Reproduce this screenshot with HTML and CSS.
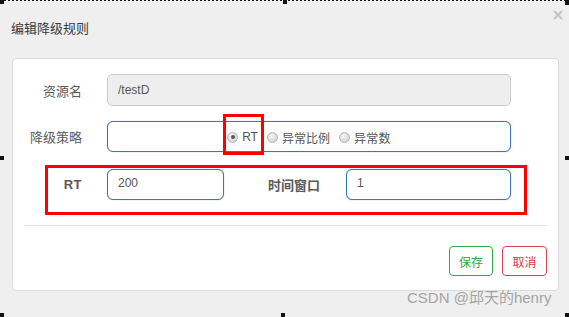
FILE: index.html
```html
<!DOCTYPE html>
<html lang="zh">
<head>
<meta charset="utf-8">
<title>编辑降级规则</title>
<link rel="stylesheet" href="styles.css">
</head>
<body>
<div class="frame">
  <div class="dashes"></div>
  <span class="handle h-tl"></span><span class="handle h-tm"></span><span class="handle h-tr"></span>
  <span class="handle h-ml"></span><span class="handle h-mr"></span>
  <span class="handle h-bl"></span><span class="handle h-bm"></span><span class="handle h-br"></span>

  <div class="header">
    <span class="title">编辑降级规则</span>
    <svg class="close" width="10" height="10" viewBox="0 0 10 10"><path d="M1 1L9 9M9 1L1 9" stroke="#c4c4c4" stroke-width="2" fill="none"/></svg>
  </div>

  <div class="card">
    <div class="form-row">
      <label class="label">资源名</label>
      <div class="input readonly">/testD</div>
    </div>
    <div class="form-row row2">
      <label class="label">降级策略</label>
      <div class="input active radios">
        <span class="radio checked"></span><span class="rtext">RT</span>
        <span class="radio"></span><span class="rtext">异常比例</span>
        <span class="radio"></span><span class="rtext last">异常数</span>
      </div>
    </div>
    <div class="form-row row3">
      <label class="label bold spaced">RT</label>
      <div class="input active small">200</div>
      <label class="label2 bold">时间窗口</label>
      <div class="input active medium">1</div>
    </div>
    <div class="divider"></div>
    <div class="actions">
      <button class="btn btn-save">保存</button>
      <button class="btn btn-cancel">取消</button>
    </div>
  </div>

  <div class="mark mark1"></div>
  <div class="mark mark2"></div>
  <div class="watermark">CSDN @邱天的henry</div>
</div>
</body>
</html>
```

FILE: styles.css
```css
html, body {
  margin: 0;
  padding: 0;
}
body {
  background: #efefef;
  font-family: "Liberation Sans", "Noto Sans CJK SC", sans-serif;
  color: #555;
}
.frame {
  position: relative;
  width: 569px;
  height: 317px;
  overflow: hidden;
}
.dashes {
  position: absolute;
  left: 0;
  top: 0;
  width: 569px;
  height: 1px;
  background: repeating-linear-gradient(90deg, #111 0 2px, transparent 2px 4px);
}
.handle {
  position: absolute;
  width: 4px;
  height: 4px;
  background: #111;
}
.h-tl { left: 0; top: 0; }
.h-tm { left: 283px; top: 0; }
.h-tr { left: 565px; top: 0; height: 5px; }
.h-ml { left: 0; top: 156px; }
.h-mr { left: 565px; top: 156px; }
.h-bl { left: 0; top: 313px; }
.h-bm { left: 281px; top: 313px; }
.h-br { left: 565px; top: 313px; }

.header {
  height: 58px;
  box-sizing: border-box;
  padding: 19px 0 0 11px;
  position: relative;
}
.title {
  font-size: 13px;
  line-height: 16px;
  color: #3a3a3a;
}
.close {
  position: absolute;
  right: 6px;
  top: 10px;
}

.card {
  margin: 0 10px 0 12px;
  height: 233px;
  box-sizing: border-box;
  border: 1px solid #dcdcdc;
  border-radius: 4px;
  background: #fff;
  padding: 15px 11px 0 11px;
}
.form-row {
  display: flex;
  align-items: center;
  height: 32px;
}
.row2 {
  margin-top: 15px;
  height: 31px;
}
.row3 {
  margin-top: 17px;
  height: 31px;
}
.label {
  width: 58px;
  text-align: right;
  font-size: 13px;
  color: #5a5a5a;
  margin-right: 25px;
  flex: none;
}
.label2 {
  font-size: 13px;
  color: #5a5a5a;
  margin-left: 44px;
  margin-right: 26px;
  flex: none;
}
.bold {
  font-weight: bold;
}
.spaced {
  letter-spacing: 0.5px;
}
.input {
  box-sizing: border-box;
  height: 100%;
  width: 404px;
  font-size: 12px;
  color: #555;
  padding-left: 10px;
  display: flex;
  align-items: center;
}
.readonly {
  background: #eee;
  border: 1px solid #ccc;
  border-radius: 5px;
}
.active {
  background: #fff;
  border: 1px solid #3577b9;
  border-radius: 6px;
  box-shadow: 0 0 1px rgba(53, 119, 185, 0.6);
}
.radios {
  justify-content: center;
  padding-left: 0;
  padding-top: 1px;
}
.small {
  width: 117px;
  align-items: flex-start;
  padding-top: 6px;
}
.medium {
  width: 165px;
  align-items: flex-start;
  padding-top: 6px;
}
.radio {
  width: 9px;
  height: 9px;
  border-radius: 50%;
  border: 1px solid #b4b4b4;
  background: radial-gradient(circle at 40% 35%, #f4f4f4 0, #d8d8d8 70%, #c6c6c6 100%);
  box-sizing: content-box;
  position: relative;
  margin-right: 4px;
  flex: none;
}
.radio.checked::after {
  content: "";
  position: absolute;
  left: 2.5px;
  top: 2.5px;
  width: 4px;
  height: 4px;
  border-radius: 50%;
  background: #555;
}
.rtext {
  font-size: 12px;
  color: #555;
  margin-right: 9px;
}
.rtext.last {
  margin-right: 0;
  letter-spacing: 0.3px;
}
.divider {
  margin-top: 25px;
  height: 1px;
  background: #e5e5e5;
}
.actions {
  display: flex;
  justify-content: flex-end;
  gap: 9px;
  margin-top: 20px;
}
.btn {
  height: 30px;
  padding: 0;
  font-family: inherit;
  font-size: 12px;
  background: #fff;
  border-radius: 4px;
}
.btn-save {
  width: 44px;
  border: 1px solid #2eac4a;
  color: #28a745;
}
.btn-cancel {
  width: 45px;
  border: 1px solid #dc4350;
  color: #dc3545;
}

.mark {
  position: absolute;
  border: 3px solid #f00;
  box-sizing: border-box;
}
.mark1 {
  left: 223px;
  top: 114px;
  width: 41px;
  height: 41px;
}
.mark2 {
  left: 45px;
  top: 165px;
  width: 482px;
  height: 50px;
}
.watermark {
  position: absolute;
  left: 407px;
  top: 289px;
  font-size: 15px;
  line-height: 18px;
  color: #a4a4a4;
  white-space: nowrap;
}
```
